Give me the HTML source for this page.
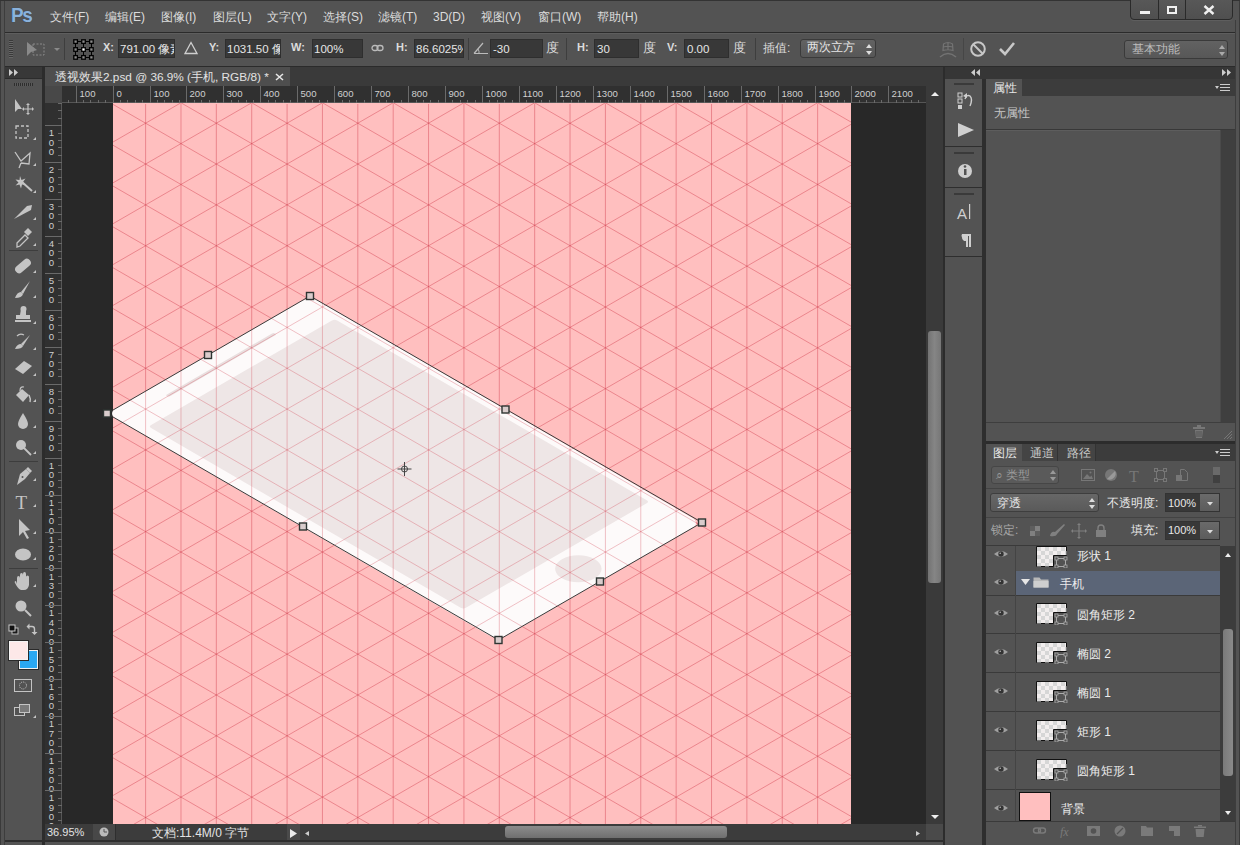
<!DOCTYPE html>
<html><head><meta charset="utf-8">
<style>
*{margin:0;padding:0;box-sizing:border-box}
html,body{width:1240px;height:845px;overflow:hidden;background:#535353;font-family:"Liberation Sans",sans-serif;color:#dcdcdc;font-size:12px}
.a{position:absolute}
.t{position:absolute;white-space:nowrap;line-height:1}
.inp{position:absolute;background:#383838;border:1px solid #2e2e2e}
.btn{position:absolute;background:linear-gradient(#626262,#575757);border:1px solid #3a3a3a;border-radius:3px}
</style></head><body>
<!-- window frame -->
<div class="a" style="left:0;top:0;width:1240px;height:845px;background:#535353;border-left:1px solid #3a3a3a;border-right:1px solid #3a3a3a"></div>
<div class="a" style="left:4px;top:1px;width:1px;height:844px;background:#3d3d3d"></div>
<div class="a" style="left:1235px;top:20px;width:1px;height:825px;background:#3d3d3d"></div>

<!-- MENU BAR -->
<div id="menubar">
<div class="a" style="left:0;top:0;width:1240px;height:1px;background:#333"></div>
<div class="t" style="left:11px;top:4px;font-size:21px;font-weight:bold;color:#8ab2dc;letter-spacing:-1.5px;transform:scaleX(0.9);transform-origin:0 0;text-shadow:0 0 1px #2a4060">Ps</div>
<div class="t" style="left:50px;top:11px">文件(F)</div>
<div class="t" style="left:105px;top:11px">编辑(E)</div>
<div class="t" style="left:161px;top:11px">图像(I)</div>
<div class="t" style="left:213px;top:11px">图层(L)</div>
<div class="t" style="left:267px;top:11px">文字(Y)</div>
<div class="t" style="left:323px;top:11px">选择(S)</div>
<div class="t" style="left:378px;top:11px">滤镜(T)</div>
<div class="t" style="left:433px;top:11px">3D(D)</div>
<div class="t" style="left:481px;top:11px">视图(V)</div>
<div class="t" style="left:538px;top:11px">窗口(W)</div>
<div class="t" style="left:597px;top:11px">帮助(H)</div>
<!-- window buttons -->
<div class="a" style="left:1130px;top:-1px;width:103px;height:21px;background:linear-gradient(#585858,#4f4f4f);border:1px solid #2a2a2a;border-radius:0 0 4px 4px;box-shadow:0 1px 0 #5e5e5e"></div>
<div class="a" style="left:1158px;top:0;width:1px;height:19px;background:#2a2a2a"></div>
<div class="a" style="left:1185px;top:0;width:1px;height:19px;background:#2a2a2a"></div>
<div class="a" style="left:1140px;top:11px;width:10px;height:3px;background:#f0f0f0"></div>
<div class="a" style="left:1167px;top:6px;width:10px;height:8px;border:2px solid #f0f0f0;border-top-width:2px"></div>
<svg class="a" style="left:1203px;top:5px" width="12" height="10"><path d="M1.5 1 L10.5 9 M10.5 1 L1.5 9" stroke="#f0f0f0" stroke-width="2.4"/></svg>
</div>

<!-- OPTIONS BAR -->
<div class="a" style="left:5px;top:32px;width:1230px;height:1px;background:#2b2b2b"></div>
<div class="a" style="left:5px;top:33px;width:1230px;height:1px;background:#5e5e5e"></div>
<div class="a" style="left:5px;top:66px;width:1230px;height:1px;background:#2b2b2b;z-index:5"></div>
<div id="optbar">
<!-- grip -->
<div class="a" style="left:9px;top:40px;width:4px;height:18px;background:repeating-linear-gradient(#3a3a3a 0 1px,#666 1px 2px)"></div>
<!-- tool icon -->
<svg class="a" style="left:25px;top:40px" width="40" height="18" viewBox="0 0 40 18">
<path d="M2 2 L2 16 L6 12 L12 10 Z" fill="#8a8a8a"/>
<rect x="8" y="4" width="11" height="11" fill="none" stroke="#8a8a8a" stroke-dasharray="2 1.5"/>
<path d="M29 8 L35 8 L32 11 Z" fill="#8a8a8a"/>
</svg>
<div class="a" style="left:64px;top:38px;width:1px;height:22px;background:#3e3e3e"></div>
<!-- reference point -->
<svg class="a" style="left:73px;top:39px" width="21" height="21" viewBox="0 0 21 21">
<g stroke="#000" stroke-width="1" fill="none"><path d="M5 2.5 H8 M13 2.5 H16 M5 10.5 H8 M13 10.5 H16 M5 18.5 H8 M13 18.5 H16 M2.5 5 V8 M2.5 13 V16 M10.5 5 V8 M10.5 13 V16 M18.5 5 V8 M18.5 13 V16"/></g>
<g fill="#8a8a8a" stroke="#000" stroke-width="1.3">
<rect x="0.8" y="0.8" width="3.6" height="3.6"/><rect x="8.7" y="0.8" width="3.6" height="3.6"/><rect x="16.6" y="0.8" width="3.6" height="3.6"/>
<rect x="0.8" y="8.7" width="3.6" height="3.6"/><rect x="8.7" y="8.7" width="3.6" height="3.6" fill="#fff"/><rect x="16.6" y="8.7" width="3.6" height="3.6"/>
<rect x="0.8" y="16.6" width="3.6" height="3.6"/><rect x="8.7" y="16.6" width="3.6" height="3.6"/><rect x="16.6" y="16.6" width="3.6" height="3.6"/>
</g></svg>
<div class="t" style="left:103px;top:42px;font-weight:bold;font-size:11px">X:</div>
<div class="a inp" style="left:118px;top:39px;width:57px;height:19px"></div>
<div class="t" style="left:120px;top:44px;color:#e6e6e6;font-size:11.5px;width:54px;overflow:hidden">791.00 像素</div>
<svg class="a" style="left:184px;top:41px" width="14" height="14"><path d="M7 1.5 L13 12.5 L1 12.5 Z" fill="none" stroke="#cfcfcf" stroke-width="1.3"/></svg>
<div class="t" style="left:209px;top:42px;font-weight:bold;font-size:11px">Y:</div>
<div class="a inp" style="left:225px;top:39px;width:56px;height:19px"></div>
<div class="t" style="left:227px;top:44px;color:#e6e6e6;font-size:11.5px;width:53px;overflow:hidden">1031.50 像素</div>
<div class="t" style="left:291px;top:42px;font-weight:bold;font-size:11px">W:</div>
<div class="a inp" style="left:312px;top:39px;width:51px;height:19px"></div>
<div class="t" style="left:314px;top:44px;color:#e6e6e6;font-size:11.5px">100%</div>
<svg class="a" style="left:371px;top:44px" width="14" height="9"><rect x="1" y="1.5" width="6" height="5" rx="2.5" fill="none" stroke="#bbb" stroke-width="1.3"/><rect x="6" y="1.5" width="6" height="5" rx="2.5" fill="none" stroke="#bbb" stroke-width="1.3"/></svg>
<div class="t" style="left:396px;top:42px;font-weight:bold;font-size:11px">H:</div>
<div class="a inp" style="left:414px;top:39px;width:50px;height:19px"></div>
<div class="t" style="left:416px;top:44px;color:#e6e6e6;font-size:11.5px;width:47px;overflow:hidden">86.6025%</div>
<div class="a" style="left:468px;top:38px;width:1px;height:22px;background:#3e3e3e"></div>
<svg class="a" style="left:473px;top:41px" width="16" height="14"><path d="M1 12.5 L15 12.5 M1 12.5 L10 2" fill="none" stroke="#bbb" stroke-width="1.2"/><path d="M6 12.5 A6 6 0 0 0 5 8" fill="none" stroke="#bbb"/></svg>
<div class="a inp" style="left:490px;top:39px;width:53px;height:19px"></div>
<div class="t" style="left:493px;top:44px;color:#e6e6e6;font-size:11.5px">-30</div>
<div class="t" style="left:546px;top:41px;font-size:13px">度</div>
<div class="a" style="left:566px;top:38px;width:1px;height:22px;background:#3e3e3e"></div>
<div class="t" style="left:577px;top:42px;font-weight:bold;font-size:11px">H:</div>
<div class="a inp" style="left:594px;top:39px;width:45px;height:19px"></div>
<div class="t" style="left:597px;top:44px;color:#e6e6e6;font-size:11.5px">30</div>
<div class="t" style="left:643px;top:41px;font-size:13px">度</div>
<div class="t" style="left:667px;top:42px;font-weight:bold;font-size:11px">V:</div>
<div class="a inp" style="left:684px;top:39px;width:45px;height:19px"></div>
<div class="t" style="left:687px;top:44px;color:#e6e6e6;font-size:11.5px">0.00</div>
<div class="t" style="left:733px;top:41px;font-size:13px">度</div>
<div class="a" style="left:755px;top:38px;width:1px;height:22px;background:#3e3e3e"></div>
<div class="t" style="left:763px;top:42px">插值:</div>
<div class="a btn" style="left:800px;top:39px;width:76px;height:19px"></div>
<div class="t" style="left:807px;top:42px;color:#e6e6e6;font-size:11.5px">两次立方</div>
<svg class="a" style="left:866px;top:44px" width="6" height="11"><path d="M0 4 L3 0 L6 4Z M0 7 L3 11 L6 7Z" fill="#ddd"/></svg>
<!-- warp / cancel / commit -->
<svg class="a" style="left:938px;top:40px" width="20" height="18"><g fill="none" stroke="#737373" stroke-width="1.2"><path d="M5.5 4 Q10 1 14.5 4 L15 10.5 Q10 9 5 10.5Z M10 2.5 V9.8 M5.3 7 Q10 5.5 14.7 7"/><path d="M2 17 Q10 10 18 17" stroke-width="1.5"/></g></svg>
<div class="a" style="left:963px;top:38px;width:1px;height:22px;background:#464646"></div>
<svg class="a" style="left:969px;top:40px" width="18" height="18"><circle cx="9" cy="9" r="6.8" fill="none" stroke="#c8c8c8" stroke-width="2"/><path d="M4.5 4.5 L13.5 13.5" stroke="#c8c8c8" stroke-width="2"/></svg>
<svg class="a" style="left:998px;top:41px" width="18" height="16"><path d="M2 8 L7 13 L16 2" fill="none" stroke="#c8c8c8" stroke-width="2.6"/></svg>
<div class="a btn" style="left:1124px;top:40px;width:104px;height:19px"></div>
<div class="t" style="left:1132px;top:43px;color:#bdbdbd">基本功能</div>
<svg class="a" style="left:1219px;top:45px" width="6" height="11"><path d="M0 4 L3 0 L6 4Z M0 7 L3 11 L6 7Z" fill="#aaa"/></svg>
</div>
<!-- LEFT TOOLBAR -->
<div class="a" style="left:5px;top:66px;width:37px;height:13px;background:#383838;border-bottom:1px solid #2c2c2c"></div>
<svg class="a" style="left:9px;top:69px" width="10" height="7"><path d="M0 0 L4 3.5 L0 7Z M5 0 L9 3.5 L5 7Z" fill="#ccc"/></svg>
<div class="a" style="left:42px;top:66px;width:3px;height:779px;background:#2c2c2c"></div>
<div class="a" style="left:14px;top:83px;width:19px;height:3px;background:repeating-linear-gradient(90deg,#2e2e2e 0 1px,#5a5a5a 1px 2px)"></div>
<svg class="a" style="left:5px;top:92px" width="37" height="630" viewBox="5 92 37 630">
<g fill="#c4c4c4" stroke="none">
<!-- move -->
<path d="M15 99 L15 112 L18 109 L22 109 Z"/>
<path d="M28 104 L28 114 M23 109 L33 109" stroke="#c4c4c4" stroke-width="1.2"/>
<path d="M28 103 l-2 2 h4z M28 115 l-2 -2 h4z M22 109 l2 -2 v4z M34 109 l-2 -2 v4z"/>
<!-- marquee -->
<rect x="16" y="126" width="12" height="12" fill="none" stroke="#c4c4c4" stroke-width="1.3" stroke-dasharray="3 2"/>
<path d="M33 140 l3 0 0 -3z"/>
<!-- lasso -->
<path d="M15 152 L21 161 L30 153 L29 164 L21 163 M21 163 L19 168" fill="none" stroke="#c4c4c4" stroke-width="1.3"/>
<path d="M33 166 l3 0 0 -3z"/>
<!-- wand -->
<path d="M22 182 L32 191" stroke="#c4c4c4" stroke-width="2"/>
<path d="M20 176 l1.5 4 4 -1.5 -2.5 3.5 3 3 -4 -0.5 -1 4 -1.5 -4 -4 1 3 -3 -3 -3 4 0.5z"/>
<path d="M33 193 l3 0 0 -3z"/>
<!-- crop/pen-ish (blade) -->
<path d="M14 219 L27 206 L32 205 L31 210 Z"/>
<path d="M33 220 l3 0 0 -3z"/>
<!-- eyedropper -->
<path d="M17 243 L25 235 L28 238 L20 246 L17 247 Z" fill="none" stroke="#c4c4c4" stroke-width="1.3"/>
<path d="M24 232 L28 228 L32 232 L28 236 Z"/>
<path d="M33 246 l3 0 0 -3z"/>
</g>
<rect x="9" y="250" width="29" height="1" fill="#3d3d3d"/>
<g fill="#c4c4c4">
<!-- healing band-aid -->
<rect x="14" y="262" width="18" height="8" rx="4" transform="rotate(-40 23 266)"/>
<path d="M33 273 l3 0 0 -3z"/>
<!-- brush -->
<path d="M30 281 L21 292 L23 294 Z"/><path d="M15 298 Q17 292 21 292 L23 294 Q22 298 15 298Z"/>
<path d="M33 298 l3 0 0 -3z"/>
<!-- stamp -->
<path d="M21 309 h5 v6 h4 v4 h-14 v-4 h4z"/><rect x="15" y="320" width="16" height="2"/><circle cx="23.5" cy="309" r="3"/>
<path d="M33 324 l3 0 0 -3z"/>
<!-- history brush -->
<path d="M30 335 L21 344 L23 346 Z"/><path d="M15 349 Q17 344 21 344 L23 346 Q22 349 15 349Z"/>
<path d="M17 336 Q20 333 24 335" fill="none" stroke="#c4c4c4" stroke-width="1.2"/>
<path d="M33 350 l3 0 0 -3z"/>
<!-- eraser -->
<path d="M15 369 L24 361 L32 366 L23 374 Z"/>
<path d="M33 376 l3 0 0 -3z"/>
<!-- bucket -->
<g transform="translate(0,3)"><path d="M16 392 L22 386 L29 392 L23 399 Z"/><path d="M20 388 Q20 383 24 384" fill="none" stroke="#c4c4c4" stroke-width="1.2"/><path d="M29 392 Q31 396 30 399" fill="none" stroke="#c4c4c4" stroke-width="1.5"/></g>
<path d="M33 402 l3 0 0 -3z"/>
<!-- blur drop -->
<path d="M23 413 Q28 421 28 424 A5 5 0 0 1 18 424 Q18 421 23 413Z"/>
<path d="M33 428 l3 0 0 -3z"/>
<!-- dodge -->
<circle cx="21" cy="445" r="5"/><path d="M24 448 L31 455" stroke="#c4c4c4" stroke-width="1.8"/>
<path d="M33 454 l3 0 0 -3z"/>
</g>
<rect x="9" y="461" width="29" height="1" fill="#3d3d3d"/>
<g fill="#c4c4c4">
<!-- pen -->
<path d="M17 485 L20 474 L26 469 L30 473 L25 479 Z"/><path d="M26 469 L28 467 L32 471 L30 473Z"/><circle cx="22.5" cy="477" r="1" fill="#535353"/>
<path d="M33 481 l3 0 0 -3z"/>
<!-- type -->
<text x="15.5" y="509" font-family="Liberation Serif" font-size="19" fill="#c4c4c4">T</text>
<path d="M33 507 l3 0 0 -3z"/>
<!-- path select -->
<path d="M19 519 L19 536 L23 532 L27 539 L29 538 L25 531 L30 530 Z"/>
<path d="M33 534 l3 0 0 -3z"/>
<!-- ellipse -->
<ellipse cx="23" cy="554.5" rx="8" ry="6"/>
<path d="M33 560 l3 0 0 -3z"/>
</g>
<rect x="9" y="568" width="29" height="1" fill="#3d3d3d"/>
<g fill="#c4c4c4">
<!-- hand -->
<path d="M17 584 L17 578 Q17 576 18.5 576 Q20 576 20 578 L20 575 Q20 573 21.5 573 Q23 573 23 575 L23 574 Q23 572 24.5 572 Q26 572 26 574 L26 577 Q26 575.5 27.5 575.5 Q29 575.5 29 577 L29 585 Q28 590 24 590 L21 590 Q18 589 15 583 Q14 581 16 581Z"/>
<path d="M33 587 l3 0 0 -3z"/>
<!-- zoom -->
<circle cx="21" cy="606" r="5.5"/><path d="M25 610 L31 616" stroke="#c4c4c4" stroke-width="2"/>
<!-- default colors -->
<rect x="12" y="628" width="6" height="6" fill="#1a1a1a" stroke="#bbb" stroke-width="1"/><rect x="9" y="625" width="6" height="6" fill="#111" stroke="#ccc" stroke-width="1"/>
<path d="M29 626.5 H32 Q34.5 626.5 34.5 629 V632" fill="none" stroke="#c4c4c4" stroke-width="1.4"/><path d="M26.5 626.5 L29.5 623.5 V629.5Z M31.5 632 H37.5 L34.5 635Z" fill="#c4c4c4"/>
</g>
<!-- fg/bg -->
<rect x="19.5" y="650.5" width="18" height="18" fill="#2aa8f2" stroke="#f0f0f0" stroke-width="1"/><rect x="18.5" y="649.5" width="20" height="20" fill="none" stroke="#2a2a2a" stroke-width="1"/>
<rect x="9.5" y="641.5" width="18" height="18" fill="#fde8e8" stroke="#f4f4f4" stroke-width="1"/><rect x="8.5" y="640.5" width="20" height="20" fill="none" stroke="#2a2a2a" stroke-width="1"/>
<!-- quick mask -->
<rect x="14.5" y="679.5" width="17" height="12" fill="none" stroke="#c4c4c4" stroke-width="1"/>
<circle cx="23" cy="685.5" r="3.5" fill="none" stroke="#c4c4c4" stroke-width="1" stroke-dasharray="1 1"/>
<!-- screen mode -->
<rect x="14.5" y="707.5" width="10" height="8" fill="none" stroke="#c4c4c4"/><rect x="19.5" y="704.5" width="10" height="8" fill="#7a7a7a" stroke="#c4c4c4"/>
<path d="M33 718 l3 0 0 -3z" fill="#c4c4c4"/>
</svg>
<!-- DOC TAB ROW -->
<div class="a" style="left:45px;top:66px;width:898px;height:20px;background:#3a3a3a;border-top:1px solid #2c2c2c"></div>
<div class="a" style="left:45px;top:67px;width:245px;height:19px;background:#4e4e4e"></div>
<div class="t" style="left:55px;top:72px;color:#e2e2e2;font-size:11.8px">透视效果2.psd @ 36.9% (手机, RGB/8) *</div>
<svg class="a" style="left:275px;top:73px" width="9" height="8"><path d="M1 1 L8 7 M8 1 L1 7" stroke="#e6e6e6" stroke-width="1.6"/></svg>
<!-- RULERS -->
<div class="a" style="left:45px;top:86px;width:17px;height:17px;background:#484848"></div>
<svg class="a" style="left:0;top:0" width="1240" height="845">
<rect x="62" y="86" width="864" height="17" fill="#303030"/>
<rect x="45" y="103" width="17" height="721" fill="#303030"/>
<line x1="62" y1="102.5" x2="926" y2="102.5" stroke="#565656"/>
<line x1="61.5" y1="103" x2="61.5" y2="824" stroke="#565656"/>
<g font-family="Liberation Sans" font-size="9.6" fill="#cfcfcf">
<line x1="68.5" y1="100" x2="68.5" y2="103" stroke="#6a6a6a"/>
<line x1="76.5" y1="86" x2="76.5" y2="103" stroke="#6a6a6a"/>
<text x="79.5" y="97">100</text>
<line x1="83.5" y1="100" x2="83.5" y2="103" stroke="#6a6a6a"/>
<line x1="90.5" y1="100" x2="90.5" y2="103" stroke="#6a6a6a"/>
<line x1="98.5" y1="100" x2="98.5" y2="103" stroke="#6a6a6a"/>
<line x1="105.5" y1="100" x2="105.5" y2="103" stroke="#6a6a6a"/>
<line x1="113.5" y1="86" x2="113.5" y2="103" stroke="#6a6a6a"/>
<text x="116.5" y="97">0</text>
<line x1="120.5" y1="100" x2="120.5" y2="103" stroke="#6a6a6a"/>
<line x1="127.5" y1="100" x2="127.5" y2="103" stroke="#6a6a6a"/>
<line x1="135.5" y1="100" x2="135.5" y2="103" stroke="#6a6a6a"/>
<line x1="142.5" y1="100" x2="142.5" y2="103" stroke="#6a6a6a"/>
<line x1="150.5" y1="86" x2="150.5" y2="103" stroke="#6a6a6a"/>
<text x="153.5" y="97">100</text>
<line x1="157.5" y1="100" x2="157.5" y2="103" stroke="#6a6a6a"/>
<line x1="164.5" y1="100" x2="164.5" y2="103" stroke="#6a6a6a"/>
<line x1="172.5" y1="100" x2="172.5" y2="103" stroke="#6a6a6a"/>
<line x1="179.5" y1="100" x2="179.5" y2="103" stroke="#6a6a6a"/>
<line x1="186.5" y1="86" x2="186.5" y2="103" stroke="#6a6a6a"/>
<text x="189.5" y="97">200</text>
<line x1="194.5" y1="100" x2="194.5" y2="103" stroke="#6a6a6a"/>
<line x1="201.5" y1="100" x2="201.5" y2="103" stroke="#6a6a6a"/>
<line x1="209.5" y1="100" x2="209.5" y2="103" stroke="#6a6a6a"/>
<line x1="216.5" y1="100" x2="216.5" y2="103" stroke="#6a6a6a"/>
<line x1="223.5" y1="86" x2="223.5" y2="103" stroke="#6a6a6a"/>
<text x="226.5" y="97">300</text>
<line x1="231.5" y1="100" x2="231.5" y2="103" stroke="#6a6a6a"/>
<line x1="238.5" y1="100" x2="238.5" y2="103" stroke="#6a6a6a"/>
<line x1="246.5" y1="100" x2="246.5" y2="103" stroke="#6a6a6a"/>
<line x1="253.5" y1="100" x2="253.5" y2="103" stroke="#6a6a6a"/>
<line x1="260.5" y1="86" x2="260.5" y2="103" stroke="#6a6a6a"/>
<text x="263.5" y="97">400</text>
<line x1="268.5" y1="100" x2="268.5" y2="103" stroke="#6a6a6a"/>
<line x1="275.5" y1="100" x2="275.5" y2="103" stroke="#6a6a6a"/>
<line x1="283.5" y1="100" x2="283.5" y2="103" stroke="#6a6a6a"/>
<line x1="290.5" y1="100" x2="290.5" y2="103" stroke="#6a6a6a"/>
<line x1="297.5" y1="86" x2="297.5" y2="103" stroke="#6a6a6a"/>
<text x="300.5" y="97">500</text>
<line x1="305.5" y1="100" x2="305.5" y2="103" stroke="#6a6a6a"/>
<line x1="312.5" y1="100" x2="312.5" y2="103" stroke="#6a6a6a"/>
<line x1="319.5" y1="100" x2="319.5" y2="103" stroke="#6a6a6a"/>
<line x1="327.5" y1="100" x2="327.5" y2="103" stroke="#6a6a6a"/>
<line x1="334.5" y1="86" x2="334.5" y2="103" stroke="#6a6a6a"/>
<text x="337.5" y="97">600</text>
<line x1="342.5" y1="100" x2="342.5" y2="103" stroke="#6a6a6a"/>
<line x1="349.5" y1="100" x2="349.5" y2="103" stroke="#6a6a6a"/>
<line x1="356.5" y1="100" x2="356.5" y2="103" stroke="#6a6a6a"/>
<line x1="364.5" y1="100" x2="364.5" y2="103" stroke="#6a6a6a"/>
<line x1="371.5" y1="86" x2="371.5" y2="103" stroke="#6a6a6a"/>
<text x="374.5" y="97">700</text>
<line x1="379.5" y1="100" x2="379.5" y2="103" stroke="#6a6a6a"/>
<line x1="386.5" y1="100" x2="386.5" y2="103" stroke="#6a6a6a"/>
<line x1="393.5" y1="100" x2="393.5" y2="103" stroke="#6a6a6a"/>
<line x1="401.5" y1="100" x2="401.5" y2="103" stroke="#6a6a6a"/>
<line x1="408.5" y1="86" x2="408.5" y2="103" stroke="#6a6a6a"/>
<text x="411.5" y="97">800</text>
<line x1="416.5" y1="100" x2="416.5" y2="103" stroke="#6a6a6a"/>
<line x1="423.5" y1="100" x2="423.5" y2="103" stroke="#6a6a6a"/>
<line x1="430.5" y1="100" x2="430.5" y2="103" stroke="#6a6a6a"/>
<line x1="438.5" y1="100" x2="438.5" y2="103" stroke="#6a6a6a"/>
<line x1="445.5" y1="86" x2="445.5" y2="103" stroke="#6a6a6a"/>
<text x="448.5" y="97">900</text>
<line x1="452.5" y1="100" x2="452.5" y2="103" stroke="#6a6a6a"/>
<line x1="460.5" y1="100" x2="460.5" y2="103" stroke="#6a6a6a"/>
<line x1="467.5" y1="100" x2="467.5" y2="103" stroke="#6a6a6a"/>
<line x1="475.5" y1="100" x2="475.5" y2="103" stroke="#6a6a6a"/>
<line x1="482.5" y1="86" x2="482.5" y2="103" stroke="#6a6a6a"/>
<text x="485.5" y="97">1000</text>
<line x1="489.5" y1="100" x2="489.5" y2="103" stroke="#6a6a6a"/>
<line x1="497.5" y1="100" x2="497.5" y2="103" stroke="#6a6a6a"/>
<line x1="504.5" y1="100" x2="504.5" y2="103" stroke="#6a6a6a"/>
<line x1="512.5" y1="100" x2="512.5" y2="103" stroke="#6a6a6a"/>
<line x1="519.5" y1="86" x2="519.5" y2="103" stroke="#6a6a6a"/>
<text x="522.5" y="97">1100</text>
<line x1="526.5" y1="100" x2="526.5" y2="103" stroke="#6a6a6a"/>
<line x1="534.5" y1="100" x2="534.5" y2="103" stroke="#6a6a6a"/>
<line x1="541.5" y1="100" x2="541.5" y2="103" stroke="#6a6a6a"/>
<line x1="549.5" y1="100" x2="549.5" y2="103" stroke="#6a6a6a"/>
<line x1="556.5" y1="86" x2="556.5" y2="103" stroke="#6a6a6a"/>
<text x="559.5" y="97">1200</text>
<line x1="563.5" y1="100" x2="563.5" y2="103" stroke="#6a6a6a"/>
<line x1="571.5" y1="100" x2="571.5" y2="103" stroke="#6a6a6a"/>
<line x1="578.5" y1="100" x2="578.5" y2="103" stroke="#6a6a6a"/>
<line x1="585.5" y1="100" x2="585.5" y2="103" stroke="#6a6a6a"/>
<line x1="593.5" y1="86" x2="593.5" y2="103" stroke="#6a6a6a"/>
<text x="596.5" y="97">1300</text>
<line x1="600.5" y1="100" x2="600.5" y2="103" stroke="#6a6a6a"/>
<line x1="608.5" y1="100" x2="608.5" y2="103" stroke="#6a6a6a"/>
<line x1="615.5" y1="100" x2="615.5" y2="103" stroke="#6a6a6a"/>
<line x1="622.5" y1="100" x2="622.5" y2="103" stroke="#6a6a6a"/>
<line x1="630.5" y1="86" x2="630.5" y2="103" stroke="#6a6a6a"/>
<text x="633.5" y="97">1400</text>
<line x1="637.5" y1="100" x2="637.5" y2="103" stroke="#6a6a6a"/>
<line x1="645.5" y1="100" x2="645.5" y2="103" stroke="#6a6a6a"/>
<line x1="652.5" y1="100" x2="652.5" y2="103" stroke="#6a6a6a"/>
<line x1="659.5" y1="100" x2="659.5" y2="103" stroke="#6a6a6a"/>
<line x1="667.5" y1="86" x2="667.5" y2="103" stroke="#6a6a6a"/>
<text x="670.5" y="97">1500</text>
<line x1="674.5" y1="100" x2="674.5" y2="103" stroke="#6a6a6a"/>
<line x1="682.5" y1="100" x2="682.5" y2="103" stroke="#6a6a6a"/>
<line x1="689.5" y1="100" x2="689.5" y2="103" stroke="#6a6a6a"/>
<line x1="696.5" y1="100" x2="696.5" y2="103" stroke="#6a6a6a"/>
<line x1="704.5" y1="86" x2="704.5" y2="103" stroke="#6a6a6a"/>
<text x="707.5" y="97">1600</text>
<line x1="711.5" y1="100" x2="711.5" y2="103" stroke="#6a6a6a"/>
<line x1="718.5" y1="100" x2="718.5" y2="103" stroke="#6a6a6a"/>
<line x1="726.5" y1="100" x2="726.5" y2="103" stroke="#6a6a6a"/>
<line x1="733.5" y1="100" x2="733.5" y2="103" stroke="#6a6a6a"/>
<line x1="741.5" y1="86" x2="741.5" y2="103" stroke="#6a6a6a"/>
<text x="744.5" y="97">1700</text>
<line x1="748.5" y1="100" x2="748.5" y2="103" stroke="#6a6a6a"/>
<line x1="755.5" y1="100" x2="755.5" y2="103" stroke="#6a6a6a"/>
<line x1="763.5" y1="100" x2="763.5" y2="103" stroke="#6a6a6a"/>
<line x1="770.5" y1="100" x2="770.5" y2="103" stroke="#6a6a6a"/>
<line x1="778.5" y1="86" x2="778.5" y2="103" stroke="#6a6a6a"/>
<text x="781.5" y="97">1800</text>
<line x1="785.5" y1="100" x2="785.5" y2="103" stroke="#6a6a6a"/>
<line x1="792.5" y1="100" x2="792.5" y2="103" stroke="#6a6a6a"/>
<line x1="800.5" y1="100" x2="800.5" y2="103" stroke="#6a6a6a"/>
<line x1="807.5" y1="100" x2="807.5" y2="103" stroke="#6a6a6a"/>
<line x1="815.5" y1="86" x2="815.5" y2="103" stroke="#6a6a6a"/>
<text x="818.5" y="97">1900</text>
<line x1="822.5" y1="100" x2="822.5" y2="103" stroke="#6a6a6a"/>
<line x1="829.5" y1="100" x2="829.5" y2="103" stroke="#6a6a6a"/>
<line x1="837.5" y1="100" x2="837.5" y2="103" stroke="#6a6a6a"/>
<line x1="844.5" y1="100" x2="844.5" y2="103" stroke="#6a6a6a"/>
<line x1="851.5" y1="86" x2="851.5" y2="103" stroke="#6a6a6a"/>
<text x="854.5" y="97">2000</text>
<line x1="859.5" y1="100" x2="859.5" y2="103" stroke="#6a6a6a"/>
<line x1="866.5" y1="100" x2="866.5" y2="103" stroke="#6a6a6a"/>
<line x1="874.5" y1="100" x2="874.5" y2="103" stroke="#6a6a6a"/>
<line x1="881.5" y1="100" x2="881.5" y2="103" stroke="#6a6a6a"/>
<line x1="888.5" y1="86" x2="888.5" y2="103" stroke="#6a6a6a"/>
<text x="891.5" y="97">2100</text>
<line x1="896.5" y1="100" x2="896.5" y2="103" stroke="#6a6a6a"/>
<line x1="903.5" y1="100" x2="903.5" y2="103" stroke="#6a6a6a"/>
<line x1="911.5" y1="100" x2="911.5" y2="103" stroke="#6a6a6a"/>
<line x1="918.5" y1="100" x2="918.5" y2="103" stroke="#6a6a6a"/><line x1="58" y1="103.5" x2="62" y2="103.5" stroke="#6a6a6a"/>
<line x1="58" y1="110.5" x2="62" y2="110.5" stroke="#6a6a6a"/>
<line x1="58" y1="118.5" x2="62" y2="118.5" stroke="#6a6a6a"/>
<line x1="45" y1="125.5" x2="62" y2="125.5" stroke="#6a6a6a"/>
<text x="51.5" text-anchor="middle" y="136.1">1</text>
<text x="51.5" text-anchor="middle" y="145.5">0</text>
<text x="51.5" text-anchor="middle" y="154.9">0</text>
<line x1="58" y1="133.5" x2="62" y2="133.5" stroke="#6a6a6a"/>
<line x1="58" y1="140.5" x2="62" y2="140.5" stroke="#6a6a6a"/>
<line x1="58" y1="147.5" x2="62" y2="147.5" stroke="#6a6a6a"/>
<line x1="58" y1="155.5" x2="62" y2="155.5" stroke="#6a6a6a"/>
<line x1="45" y1="162.5" x2="62" y2="162.5" stroke="#6a6a6a"/>
<text x="51.5" text-anchor="middle" y="173.1">2</text>
<text x="51.5" text-anchor="middle" y="182.5">0</text>
<text x="51.5" text-anchor="middle" y="191.9">0</text>
<line x1="58" y1="169.5" x2="62" y2="169.5" stroke="#6a6a6a"/>
<line x1="58" y1="177.5" x2="62" y2="177.5" stroke="#6a6a6a"/>
<line x1="58" y1="184.5" x2="62" y2="184.5" stroke="#6a6a6a"/>
<line x1="58" y1="192.5" x2="62" y2="192.5" stroke="#6a6a6a"/>
<line x1="45" y1="199.5" x2="62" y2="199.5" stroke="#6a6a6a"/>
<text x="51.5" text-anchor="middle" y="210.0">3</text>
<text x="51.5" text-anchor="middle" y="219.4">0</text>
<text x="51.5" text-anchor="middle" y="228.8">0</text>
<line x1="58" y1="206.5" x2="62" y2="206.5" stroke="#6a6a6a"/>
<line x1="58" y1="214.5" x2="62" y2="214.5" stroke="#6a6a6a"/>
<line x1="58" y1="221.5" x2="62" y2="221.5" stroke="#6a6a6a"/>
<line x1="58" y1="229.5" x2="62" y2="229.5" stroke="#6a6a6a"/>
<line x1="45" y1="236.5" x2="62" y2="236.5" stroke="#6a6a6a"/>
<text x="51.5" text-anchor="middle" y="247.0">4</text>
<text x="51.5" text-anchor="middle" y="256.4">0</text>
<text x="51.5" text-anchor="middle" y="265.8">0</text>
<line x1="58" y1="243.5" x2="62" y2="243.5" stroke="#6a6a6a"/>
<line x1="58" y1="251.5" x2="62" y2="251.5" stroke="#6a6a6a"/>
<line x1="58" y1="258.5" x2="62" y2="258.5" stroke="#6a6a6a"/>
<line x1="58" y1="266.5" x2="62" y2="266.5" stroke="#6a6a6a"/>
<line x1="45" y1="273.5" x2="62" y2="273.5" stroke="#6a6a6a"/>
<text x="51.5" text-anchor="middle" y="283.9">5</text>
<text x="51.5" text-anchor="middle" y="293.3">0</text>
<text x="51.5" text-anchor="middle" y="302.7">0</text>
<line x1="58" y1="280.5" x2="62" y2="280.5" stroke="#6a6a6a"/>
<line x1="58" y1="288.5" x2="62" y2="288.5" stroke="#6a6a6a"/>
<line x1="58" y1="295.5" x2="62" y2="295.5" stroke="#6a6a6a"/>
<line x1="58" y1="302.5" x2="62" y2="302.5" stroke="#6a6a6a"/>
<line x1="45" y1="310.5" x2="62" y2="310.5" stroke="#6a6a6a"/>
<text x="51.5" text-anchor="middle" y="320.9">6</text>
<text x="51.5" text-anchor="middle" y="330.3">0</text>
<text x="51.5" text-anchor="middle" y="339.7">0</text>
<line x1="58" y1="317.5" x2="62" y2="317.5" stroke="#6a6a6a"/>
<line x1="58" y1="325.5" x2="62" y2="325.5" stroke="#6a6a6a"/>
<line x1="58" y1="332.5" x2="62" y2="332.5" stroke="#6a6a6a"/>
<line x1="58" y1="339.5" x2="62" y2="339.5" stroke="#6a6a6a"/>
<line x1="45" y1="347.5" x2="62" y2="347.5" stroke="#6a6a6a"/>
<text x="51.5" text-anchor="middle" y="357.8">7</text>
<text x="51.5" text-anchor="middle" y="367.2">0</text>
<text x="51.5" text-anchor="middle" y="376.6">0</text>
<line x1="58" y1="354.5" x2="62" y2="354.5" stroke="#6a6a6a"/>
<line x1="58" y1="362.5" x2="62" y2="362.5" stroke="#6a6a6a"/>
<line x1="58" y1="369.5" x2="62" y2="369.5" stroke="#6a6a6a"/>
<line x1="58" y1="376.5" x2="62" y2="376.5" stroke="#6a6a6a"/>
<line x1="45" y1="384.5" x2="62" y2="384.5" stroke="#6a6a6a"/>
<text x="51.5" text-anchor="middle" y="394.8">8</text>
<text x="51.5" text-anchor="middle" y="404.2">0</text>
<text x="51.5" text-anchor="middle" y="413.6">0</text>
<line x1="58" y1="391.5" x2="62" y2="391.5" stroke="#6a6a6a"/>
<line x1="58" y1="399.5" x2="62" y2="399.5" stroke="#6a6a6a"/>
<line x1="58" y1="406.5" x2="62" y2="406.5" stroke="#6a6a6a"/>
<line x1="58" y1="413.5" x2="62" y2="413.5" stroke="#6a6a6a"/>
<line x1="45" y1="421.5" x2="62" y2="421.5" stroke="#6a6a6a"/>
<text x="51.5" text-anchor="middle" y="431.7">9</text>
<text x="51.5" text-anchor="middle" y="441.1">0</text>
<text x="51.5" text-anchor="middle" y="450.5">0</text>
<line x1="58" y1="428.5" x2="62" y2="428.5" stroke="#6a6a6a"/>
<line x1="58" y1="435.5" x2="62" y2="435.5" stroke="#6a6a6a"/>
<line x1="58" y1="443.5" x2="62" y2="443.5" stroke="#6a6a6a"/>
<line x1="58" y1="450.5" x2="62" y2="450.5" stroke="#6a6a6a"/>
<line x1="45" y1="458.5" x2="62" y2="458.5" stroke="#6a6a6a"/>
<text x="51.5" text-anchor="middle" y="468.6">1</text>
<text x="51.5" text-anchor="middle" y="478.0">0</text>
<text x="51.5" text-anchor="middle" y="487.4">0</text>
<text x="51.5" text-anchor="middle" y="496.8">0</text>
<line x1="58" y1="465.5" x2="62" y2="465.5" stroke="#6a6a6a"/>
<line x1="58" y1="472.5" x2="62" y2="472.5" stroke="#6a6a6a"/>
<line x1="58" y1="480.5" x2="62" y2="480.5" stroke="#6a6a6a"/>
<line x1="58" y1="487.5" x2="62" y2="487.5" stroke="#6a6a6a"/>
<line x1="45" y1="495.5" x2="62" y2="495.5" stroke="#6a6a6a"/>
<text x="51.5" text-anchor="middle" y="505.6">1</text>
<text x="51.5" text-anchor="middle" y="515.0">1</text>
<text x="51.5" text-anchor="middle" y="524.4">0</text>
<text x="51.5" text-anchor="middle" y="533.8">0</text>
<line x1="58" y1="502.5" x2="62" y2="502.5" stroke="#6a6a6a"/>
<line x1="58" y1="509.5" x2="62" y2="509.5" stroke="#6a6a6a"/>
<line x1="58" y1="517.5" x2="62" y2="517.5" stroke="#6a6a6a"/>
<line x1="58" y1="524.5" x2="62" y2="524.5" stroke="#6a6a6a"/>
<line x1="45" y1="532.5" x2="62" y2="532.5" stroke="#6a6a6a"/>
<text x="51.5" text-anchor="middle" y="542.5">1</text>
<text x="51.5" text-anchor="middle" y="551.9">2</text>
<text x="51.5" text-anchor="middle" y="561.3">0</text>
<text x="51.5" text-anchor="middle" y="570.7">0</text>
<line x1="58" y1="539.5" x2="62" y2="539.5" stroke="#6a6a6a"/>
<line x1="58" y1="546.5" x2="62" y2="546.5" stroke="#6a6a6a"/>
<line x1="58" y1="554.5" x2="62" y2="554.5" stroke="#6a6a6a"/>
<line x1="58" y1="561.5" x2="62" y2="561.5" stroke="#6a6a6a"/>
<line x1="45" y1="568.5" x2="62" y2="568.5" stroke="#6a6a6a"/>
<text x="51.5" text-anchor="middle" y="579.5">1</text>
<text x="51.5" text-anchor="middle" y="588.9">3</text>
<text x="51.5" text-anchor="middle" y="598.3">0</text>
<text x="51.5" text-anchor="middle" y="607.7">0</text>
<line x1="58" y1="576.5" x2="62" y2="576.5" stroke="#6a6a6a"/>
<line x1="58" y1="583.5" x2="62" y2="583.5" stroke="#6a6a6a"/>
<line x1="58" y1="591.5" x2="62" y2="591.5" stroke="#6a6a6a"/>
<line x1="58" y1="598.5" x2="62" y2="598.5" stroke="#6a6a6a"/>
<line x1="45" y1="605.5" x2="62" y2="605.5" stroke="#6a6a6a"/>
<text x="51.5" text-anchor="middle" y="616.4">1</text>
<text x="51.5" text-anchor="middle" y="625.8">4</text>
<text x="51.5" text-anchor="middle" y="635.2">0</text>
<text x="51.5" text-anchor="middle" y="644.6">0</text>
<line x1="58" y1="613.5" x2="62" y2="613.5" stroke="#6a6a6a"/>
<line x1="58" y1="620.5" x2="62" y2="620.5" stroke="#6a6a6a"/>
<line x1="58" y1="628.5" x2="62" y2="628.5" stroke="#6a6a6a"/>
<line x1="58" y1="635.5" x2="62" y2="635.5" stroke="#6a6a6a"/>
<line x1="45" y1="642.5" x2="62" y2="642.5" stroke="#6a6a6a"/>
<text x="51.5" text-anchor="middle" y="653.4">1</text>
<text x="51.5" text-anchor="middle" y="662.8">5</text>
<text x="51.5" text-anchor="middle" y="672.2">0</text>
<text x="51.5" text-anchor="middle" y="681.6">0</text>
<line x1="58" y1="650.5" x2="62" y2="650.5" stroke="#6a6a6a"/>
<line x1="58" y1="657.5" x2="62" y2="657.5" stroke="#6a6a6a"/>
<line x1="58" y1="665.5" x2="62" y2="665.5" stroke="#6a6a6a"/>
<line x1="58" y1="672.5" x2="62" y2="672.5" stroke="#6a6a6a"/>
<line x1="45" y1="679.5" x2="62" y2="679.5" stroke="#6a6a6a"/>
<text x="51.5" text-anchor="middle" y="690.3">1</text>
<text x="51.5" text-anchor="middle" y="699.7">6</text>
<text x="51.5" text-anchor="middle" y="709.1">0</text>
<text x="51.5" text-anchor="middle" y="718.5">0</text>
<line x1="58" y1="687.5" x2="62" y2="687.5" stroke="#6a6a6a"/>
<line x1="58" y1="694.5" x2="62" y2="694.5" stroke="#6a6a6a"/>
<line x1="58" y1="701.5" x2="62" y2="701.5" stroke="#6a6a6a"/>
<line x1="58" y1="709.5" x2="62" y2="709.5" stroke="#6a6a6a"/>
<line x1="45" y1="716.5" x2="62" y2="716.5" stroke="#6a6a6a"/>
<text x="51.5" text-anchor="middle" y="727.2">1</text>
<text x="51.5" text-anchor="middle" y="736.6">7</text>
<text x="51.5" text-anchor="middle" y="746.0">0</text>
<text x="51.5" text-anchor="middle" y="755.4">0</text>
<line x1="58" y1="724.5" x2="62" y2="724.5" stroke="#6a6a6a"/>
<line x1="58" y1="731.5" x2="62" y2="731.5" stroke="#6a6a6a"/>
<line x1="58" y1="738.5" x2="62" y2="738.5" stroke="#6a6a6a"/>
<line x1="58" y1="746.5" x2="62" y2="746.5" stroke="#6a6a6a"/>
<line x1="45" y1="753.5" x2="62" y2="753.5" stroke="#6a6a6a"/>
<text x="51.5" text-anchor="middle" y="764.2">1</text>
<text x="51.5" text-anchor="middle" y="773.6">8</text>
<text x="51.5" text-anchor="middle" y="783.0">0</text>
<text x="51.5" text-anchor="middle" y="792.4">0</text>
<line x1="58" y1="761.5" x2="62" y2="761.5" stroke="#6a6a6a"/>
<line x1="58" y1="768.5" x2="62" y2="768.5" stroke="#6a6a6a"/>
<line x1="58" y1="775.5" x2="62" y2="775.5" stroke="#6a6a6a"/>
<line x1="58" y1="783.5" x2="62" y2="783.5" stroke="#6a6a6a"/>
<line x1="45" y1="790.5" x2="62" y2="790.5" stroke="#6a6a6a"/>
<text x="51.5" text-anchor="middle" y="801.1">1</text>
<text x="51.5" text-anchor="middle" y="810.5">9</text>
<text x="51.5" text-anchor="middle" y="819.9">0</text>
<text x="51.5" text-anchor="middle" y="829.3">0</text>
<line x1="58" y1="798.5" x2="62" y2="798.5" stroke="#6a6a6a"/>
<line x1="58" y1="805.5" x2="62" y2="805.5" stroke="#6a6a6a"/>
<line x1="58" y1="812.5" x2="62" y2="812.5" stroke="#6a6a6a"/>
<line x1="58" y1="820.5" x2="62" y2="820.5" stroke="#6a6a6a"/></g>
</svg>
<!-- CANVAS -->
<svg class="a" style="left:0;top:0" width="1240" height="845">
<rect x="62" y="103" width="864" height="721" fill="#282828"/>
<rect x="113" y="103" width="738" height="721" fill="#ffbfbf"/>
<defs><clipPath id="pk"><rect x="113" y="103" width="738" height="721"/></clipPath><clipPath id="ph"><path d="M310 296 L702 522.5 L498.5 640 L107 413.5 Z"/></clipPath><g id="grid" stroke="#d03848" stroke-width="1" fill="none"><line x1="145.60" y1="104" x2="145.60" y2="824"/>
<line x1="180.97" y1="104" x2="180.97" y2="824"/>
<line x1="216.34" y1="104" x2="216.34" y2="824"/>
<line x1="251.71" y1="104" x2="251.71" y2="824"/>
<line x1="287.08" y1="104" x2="287.08" y2="824"/>
<line x1="322.45" y1="104" x2="322.45" y2="824"/>
<line x1="357.82" y1="104" x2="357.82" y2="824"/>
<line x1="393.19" y1="104" x2="393.19" y2="824"/>
<line x1="428.56" y1="104" x2="428.56" y2="824"/>
<line x1="463.93" y1="104" x2="463.93" y2="824"/>
<line x1="499.30" y1="104" x2="499.30" y2="824"/>
<line x1="534.67" y1="104" x2="534.67" y2="824"/>
<line x1="570.04" y1="104" x2="570.04" y2="824"/>
<line x1="605.41" y1="104" x2="605.41" y2="824"/>
<line x1="640.78" y1="104" x2="640.78" y2="824"/>
<line x1="676.15" y1="104" x2="676.15" y2="824"/>
<line x1="711.52" y1="104" x2="711.52" y2="824"/>
<line x1="746.89" y1="104" x2="746.89" y2="824"/>
<line x1="782.26" y1="104" x2="782.26" y2="824"/>
<line x1="817.63" y1="104" x2="817.63" y2="824"/>
<line x1="113" y1="-304.04" x2="851" y2="122.05"/>
<line x1="113" y1="-263.20" x2="851" y2="162.89"/>
<line x1="113" y1="-222.36" x2="851" y2="203.73"/>
<line x1="113" y1="-181.51" x2="851" y2="244.57"/>
<line x1="113" y1="-140.67" x2="851" y2="285.41"/>
<line x1="113" y1="-99.83" x2="851" y2="326.25"/>
<line x1="113" y1="-58.99" x2="851" y2="367.10"/>
<line x1="113" y1="-18.15" x2="851" y2="407.94"/>
<line x1="113" y1="22.69" x2="851" y2="448.78"/>
<line x1="113" y1="63.54" x2="851" y2="489.62"/>
<line x1="113" y1="104.38" x2="851" y2="530.46"/>
<line x1="113" y1="145.22" x2="851" y2="571.30"/>
<line x1="113" y1="186.06" x2="851" y2="612.15"/>
<line x1="113" y1="226.90" x2="851" y2="652.99"/>
<line x1="113" y1="267.75" x2="851" y2="693.83"/>
<line x1="113" y1="308.59" x2="851" y2="734.67"/>
<line x1="113" y1="349.43" x2="851" y2="775.51"/>
<line x1="113" y1="390.27" x2="851" y2="816.36"/>
<line x1="113" y1="431.11" x2="851" y2="857.20"/>
<line x1="113" y1="471.95" x2="851" y2="898.04"/>
<line x1="113" y1="512.80" x2="851" y2="938.88"/>
<line x1="113" y1="553.64" x2="851" y2="979.72"/>
<line x1="113" y1="594.48" x2="851" y2="1020.56"/>
<line x1="113" y1="635.32" x2="851" y2="1061.41"/>
<line x1="113" y1="676.16" x2="851" y2="1102.25"/>
<line x1="113" y1="717.00" x2="851" y2="1143.09"/>
<line x1="113" y1="757.85" x2="851" y2="1183.93"/>
<line x1="113" y1="798.69" x2="851" y2="1224.77"/>
<line x1="113" y1="142.02" x2="851" y2="-284.06"/>
<line x1="113" y1="182.86" x2="851" y2="-243.22"/>
<line x1="113" y1="223.71" x2="851" y2="-202.38"/>
<line x1="113" y1="264.55" x2="851" y2="-161.54"/>
<line x1="113" y1="305.39" x2="851" y2="-120.70"/>
<line x1="113" y1="346.23" x2="851" y2="-79.85"/>
<line x1="113" y1="387.07" x2="851" y2="-39.01"/>
<line x1="113" y1="427.91" x2="851" y2="1.83"/>
<line x1="113" y1="468.76" x2="851" y2="42.67"/>
<line x1="113" y1="509.60" x2="851" y2="83.51"/>
<line x1="113" y1="550.44" x2="851" y2="124.35"/>
<line x1="113" y1="591.28" x2="851" y2="165.20"/>
<line x1="113" y1="632.12" x2="851" y2="206.04"/>
<line x1="113" y1="672.96" x2="851" y2="246.88"/>
<line x1="113" y1="713.81" x2="851" y2="287.72"/>
<line x1="113" y1="754.65" x2="851" y2="328.56"/>
<line x1="113" y1="795.49" x2="851" y2="369.41"/>
<line x1="113" y1="836.33" x2="851" y2="410.25"/>
<line x1="113" y1="877.17" x2="851" y2="451.09"/>
<line x1="113" y1="918.02" x2="851" y2="491.93"/>
<line x1="113" y1="958.86" x2="851" y2="532.77"/>
<line x1="113" y1="999.70" x2="851" y2="573.61"/>
<line x1="113" y1="1040.54" x2="851" y2="614.46"/>
<line x1="113" y1="1081.38" x2="851" y2="655.30"/>
<line x1="113" y1="1122.22" x2="851" y2="696.14"/>
<line x1="113" y1="1163.07" x2="851" y2="736.98"/>
<line x1="113" y1="1203.91" x2="851" y2="777.82"/>
<line x1="113" y1="1244.75" x2="851" y2="818.66"/></g></defs>
<use href="#grid" clip-path="url(#pk)" stroke-opacity="0.42"/>
<g transform="matrix(0.8653,-0.5009,0.8648,0.5021,107,413.5)">
<rect x="0" y="0" width="234.6" height="452.1" rx="10" fill="#fdfafa"/>
<rect x="11" y="37" width="215" height="364" rx="3" fill="#eee6e6"/>
<rect x="52" y="15.5" width="125" height="3.5" rx="1.7" fill="#e9dfdf"/>
<circle cx="118" cy="427" r="19" fill="#eee6e6"/>
</g>
<g clip-path="url(#ph)"><use href="#grid" style="stroke:#e0506a" stroke-opacity="0.3"/></g>


<!-- transform box -->
<path d="M310 296 L702 522.5 L498.5 640 L107 413.5 Z" fill="none" stroke="#3a3a3a" stroke-width="1"/>
<g fill="#d9cccc" stroke="#2e3532" stroke-width="1.4">
<rect x="306.5" y="292.5" width="7" height="7"/>
<rect x="698.5" y="519" width="7" height="7"/>
<rect x="495" y="636.5" width="7" height="7"/>
<rect x="103.5" y="410" width="7" height="7"/>
<rect x="204.5" y="351.5" width="7" height="7"/>
<rect x="502" y="406" width="7" height="7"/>
<rect x="596.5" y="578" width="7" height="7"/>
<rect x="299.5" y="523" width="7" height="7"/>
</g>
<g stroke="#444" stroke-width="1" fill="none"><circle cx="404.5" cy="469" r="3"/><path d="M404.5 462 V476 M397.5 469 H411.5"/></g>
</svg>
<!-- vertical scrollbar -->
<div class="a" style="left:926px;top:86px;width:17px;height:738px;background:#3a3a3a"></div>
<div class="a" style="left:928px;top:331px;width:13px;height:252px;background:linear-gradient(90deg,#737373,#858585 50%,#777);border-radius:3px"></div>
<svg class="a" style="left:931px;top:92px" width="8" height="4"><path d="M0 4 L4.0 0 L8 4Z" fill="#eee"/></svg>
<svg class="a" style="left:931px;top:815px" width="8" height="4"><path d="M0 0 L4.0 4 L8 0Z" fill="#eee"/></svg>
<div class="a" style="left:943px;top:66px;width:2px;height:779px;background:#2c2c2c"></div>
<!-- STATUS BAR -->
<div class="a" style="left:45px;top:824px;width:898px;height:16px;background:#3c3c3c"></div>
<div class="t" style="left:47px;top:827px;font-size:11px;color:#e4e4e4">36.95%</div>
<div class="a" style="left:93px;top:824px;width:23px;height:16px;background:#484848;border-right:1px solid #2e2e2e"></div>
<svg class="a" style="left:98px;top:826px" width="12" height="12"><circle cx="6" cy="6" r="4.5" fill="#bbb"/><path d="M6 3 V6 H9" stroke="#555" fill="none"/></svg>
<div class="t" style="left:152px;top:827px;font-size:12px;color:#e4e4e4">文档:11.4M/0 字节</div>
<div class="a" style="left:287px;top:824px;width:13px;height:16px;background:#4a4a4a"></div>
<svg class="a" style="left:290px;top:829px" width="7" height="9"><path d="M0 0 L7 4.5 L0 9Z" fill="#eee"/></svg>
<svg class="a" style="left:305px;top:831px" width="4" height="5"><path d="M4 0 L0 2.5 L4 5Z" fill="#ccc"/></svg>
<div class="a" style="left:505px;top:826px;width:222px;height:12px;background:linear-gradient(#8c8c8c,#6f6f6f);border-radius:3px"></div>
<svg class="a" style="left:916px;top:831px" width="4" height="5"><path d="M0 0 L4 2.5 L0 5Z" fill="#ccc"/></svg>
<div class="a" style="left:926px;top:824px;width:17px;height:16px;background:#4a4a4a"></div>
<div class="a" style="left:5px;top:840px;width:1230px;height:2px;background:#2e2e2e"></div>
<!-- RIGHT ICON COLUMN -->
<div class="a" style="left:945px;top:66px;width:290px;height:13px;background:#363636"></div>
<svg class="a" style="left:971px;top:69px" width="10" height="7"><path d="M4 0 L0 3.5 L4 7Z M9 0 L5 3.5 L9 7Z" fill="#ccc"/></svg>
<svg class="a" style="left:1222px;top:69px" width="10" height="7"><path d="M0 0 L4 3.5 L0 7Z M5 0 L9 3.5 L5 7Z" fill="#ccc"/></svg>
<div class="a" style="left:945px;top:79px;width:37px;height:766px;background:#525252"></div>
<div class="a" style="left:945px;top:79px;width:37px;height:68px;background:#535353;border-bottom:1px solid #2e2e2e"></div>
<div class="a" style="left:945px;top:148px;width:37px;height:40px;background:#535353;border-bottom:1px solid #2e2e2e"></div>
<div class="a" style="left:945px;top:189px;width:37px;height:68px;background:#535353;border-bottom:1px solid #2e2e2e"></div>
<div class="a" style="left:954px;top:83px;width:20px;height:2px;background:#3a3a3a"></div>
<div class="a" style="left:954px;top:152px;width:20px;height:2px;background:#3a3a3a"></div>
<div class="a" style="left:954px;top:193px;width:20px;height:2px;background:#3a3a3a"></div>
<svg class="a" style="left:945px;top:79px" width="38" height="180" viewBox="945 79 38 180">
<g fill="#cfcfcf">
<rect x="958" y="93" width="4" height="4" fill="none" stroke="#cfcfcf"/><rect x="958" y="99" width="4" height="4" fill="none" stroke="#cfcfcf"/><rect x="958" y="105" width="4" height="4"/>
<path d="M965 99 Q967 94 970 96 Q973 99 970 106" fill="none" stroke="#cfcfcf" stroke-width="1.4"/><path d="M963 96 l4 -3 v5z"/>
<path d="M958 123 L974 130 L958 137 Z"/>
<circle cx="965" cy="171" r="7"/><rect x="964" y="169" width="2.5" height="6" fill="#535353"/><circle cx="965" cy="166.5" r="1.3" fill="#535353"/>
<text x="957" y="219" font-family="Liberation Sans" font-size="15" fill="#cfcfcf">A</text><rect x="969" y="204" width="1.2" height="15"/>
<path d="M962 234 h9 v13 h-2 v-11 h-1 v11 h-2 v-6 a3.5 3.5 0 0 1 -4 -3.5 a3.5 3.5 0 0 1 0 -3.5z"/>
</g></svg>
<div class="a" style="left:982px;top:79px;width:4px;height:766px;background:#2e2e2e"></div>
<!-- PROPERTIES PANEL -->
<div class="a" style="left:986px;top:79px;width:249px;height:17px;background:#3c3c3c"></div>
<div class="a" style="left:986px;top:79px;width:36px;height:17px;background:#535353"></div>
<div class="t" style="left:993px;top:82px;color:#e8e8e8">属性</div>
<svg class="a" style="left:1215px;top:83px" width="16" height="10"><path d="M0 3 L4 3 L2 6Z" fill="#ccc"/><path d="M5 1.5 H15 M5 4.5 H15 M5 7.5 H15" stroke="#ccc"/></svg>
<div class="a" style="left:986px;top:96px;width:249px;height:34px;background:#535353"></div>
<div class="t" style="left:994px;top:107px;color:#c6c6c6">无属性</div>
<div class="a" style="left:986px;top:129px;width:249px;height:1px;background:#383838"></div>
<div class="a" style="left:986px;top:130px;width:234px;height:293px;background:#535353;border-top:1px solid #5d5d5d"></div>
<div class="a" style="left:1220px;top:130px;width:15px;height:293px;background:#3f3f3f;border-left:1px solid #4a4a4a"></div>
<div class="a" style="left:986px;top:422px;width:249px;height:1px;background:#3e3e3e"></div>
<div class="a" style="left:986px;top:423px;width:249px;height:18px;background:#535353"></div>
<svg class="a" style="left:1192px;top:425px" width="14" height="14"><rect x="1" y="2" width="12" height="2" fill="#777"/><rect x="5" y="0" width="4" height="2" fill="#777"/><path d="M3 5 h8 l-1 8 h-6z" fill="#777"/><path d="M5 6 v6 M7 6 v6 M9 6 v6" stroke="#535353"/></svg>
<svg class="a" style="left:1223px;top:430px" width="10" height="10"><path d="M9 1 L1 9 M9 4 L4 9 M9 7 L7 9" stroke="#777"/></svg>
<div class="a" style="left:986px;top:441px;width:249px;height:3px;background:#2c2c2c"></div>
<!-- LAYERS PANEL -->
<div class="a" style="left:986px;top:444px;width:249px;height:17px;background:#3c3c3c"></div>
<div class="a" style="left:986px;top:444px;width:36px;height:17px;background:#535353"></div>
<div class="a" style="left:1022px;top:444px;width:36px;height:17px;background:#444;border-right:1px solid #333"></div>
<div class="a" style="left:1058px;top:444px;width:38px;height:17px;background:#444;border-right:1px solid #333"></div>
<div class="t" style="left:993px;top:447px;color:#e8e8e8">图层</div>
<div class="t" style="left:1030px;top:447px;color:#c8c8c8">通道</div>
<div class="t" style="left:1067px;top:447px;color:#c8c8c8">路径</div>
<svg class="a" style="left:1215px;top:448px" width="16" height="10"><path d="M0 3 L4 3 L2 6Z" fill="#ccc"/><path d="M5 1.5 H15 M5 4.5 H15 M5 7.5 H15" stroke="#ccc"/></svg>
<div class="a" style="left:986px;top:461px;width:249px;height:385px;background:#535353"></div>
<!-- filter row -->
<div class="a" style="left:991px;top:466px;width:68px;height:18px;background:#5a5a5a;border:1px solid #464646;border-radius:3px"></div>
<div class="t" style="left:996px;top:469px;color:#9a9a9a">⌕ 类型</div>
<svg class="a" style="left:1050px;top:470px" width="6" height="11"><path d="M0 4 L3 0 L6 4Z M0 7 L3 11 L6 7Z" fill="#999"/></svg>
<svg class="a" style="left:1078px;top:466px" width="150" height="20" viewBox="1078 466 150 20">
<g fill="#777" stroke="#777">
<rect x="1081.5" y="469.5" width="13" height="11" fill="none"/><path d="M1083 479 L1087 474 L1090 477 L1091.5 475.5 L1093 479Z" stroke="none"/><circle cx="1090.5" cy="472.5" r="1" stroke="none"/>
<circle cx="1111" cy="475" r="6" stroke="none"/><path d="M1107 479 L1115 471 A6 6 0 0 1 1107 479Z" fill="#999" stroke="none"/>
<text x="1129" y="482" font-family="Liberation Serif" font-size="16" stroke="none">T</text>
<rect x="1156.5" y="470.5" width="8" height="9" fill="none"/><rect x="1154.5" y="468.5" width="3" height="3" fill="#535353"/><rect x="1163.5" y="468.5" width="3" height="3" fill="#535353"/><rect x="1154.5" y="478.5" width="3" height="3" fill="#535353"/><rect x="1163.5" y="478.5" width="3" height="3" fill="#535353"/>
<path d="M1180.5 469.5 h4 l3 3 v8 h-7z" fill="none"/><rect x="1176" y="475" width="6" height="6" stroke="none"/>
<rect x="1213" y="467" width="7" height="16" stroke="none" fill="#404040"/><rect x="1213" y="467" width="7" height="8" stroke="none" fill="#6a6a6a"/>
</g></svg>
<div class="a" style="left:986px;top:488px;width:249px;height:1px;background:#434343"></div>
<!-- blend row -->
<div class="a" style="left:990px;top:493px;width:109px;height:19px;background:linear-gradient(#676767,#5a5a5a);border:1px solid #3e3e3e;border-radius:3px"></div>
<div class="t" style="left:997px;top:497px;color:#e8e8e8">穿透</div>
<svg class="a" style="left:1089px;top:498px" width="6" height="11"><path d="M0 4 L3 0 L6 4Z M0 7 L3 11 L6 7Z" fill="#ddd"/></svg>
<div class="t" style="left:1107px;top:497px;color:#e8e8e8">不透明度:</div>
<div class="a" style="left:1165px;top:493px;width:55px;height:19px;background:#383838;border:1px solid #333"></div>
<div class="a" style="left:1200px;top:494px;width:19px;height:17px;background:linear-gradient(#6a6a6a,#5c5c5c)"></div>
<div class="t" style="left:1168px;top:498px;color:#e8e8e8;font-size:11px">100%</div>
<svg class="a" style="left:1207px;top:502px" width="6" height="3.5"><path d="M0 0 L3.0 3.5 L6 0Z" fill="#ddd"/></svg>
<div class="a" style="left:986px;top:517px;width:249px;height:1px;background:#434343"></div>
<!-- lock row -->
<div class="t" style="left:991px;top:524px;color:#a8a8a8">锁定:</div>
<svg class="a" style="left:1028px;top:522px" width="80" height="18" viewBox="1028 522 80 18">
<g fill="#808080">
<rect x="1030" y="526" width="10" height="10"/><rect x="1030" y="526" width="5" height="5" fill="#5e5e5e"/><rect x="1035" y="531" width="5" height="5" fill="#5e5e5e"/>
<path d="M1050 536 Q1051 531 1055 532 L1064 524 L1065 525 L1057 534 Q1056 537 1050 536Z"/>
<path d="M1079 524 V538 M1072 531 H1086" stroke="#808080" stroke-width="1.2"/><path d="M1079 523 l-2 2 h4z M1079 539 l-2 -2 h4z M1071 531 l2 -2 v4z M1087 531 l-2 -2 v4z"/>
<rect x="1096" y="530" width="10" height="7"/><path d="M1098 530 v-2 a3 3 0 0 1 6 0 v2" fill="none" stroke="#808080" stroke-width="1.4"/>
</g></svg>
<div class="t" style="left:1131px;top:524px;color:#e8e8e8">填充:</div>
<div class="a" style="left:1165px;top:521px;width:55px;height:19px;background:#383838;border:1px solid #333"></div>
<div class="a" style="left:1200px;top:522px;width:19px;height:17px;background:linear-gradient(#6a6a6a,#5c5c5c)"></div>
<div class="t" style="left:1168px;top:525px;color:#e8e8e8;font-size:11px">100%</div>
<svg class="a" style="left:1207px;top:530px" width="6" height="3.5"><path d="M0 0 L3.0 3.5 L6 0Z" fill="#ddd"/></svg>
<div class="a" style="left:986px;top:545px;width:234px;height:1px;background:#3a3a3a"></div>
<!-- LAYER ROWS -->
<svg width="0" height="0" style="position:absolute"><defs>
<symbol id="eye" viewBox="0 0 16 10"><path d="M1 5 Q8 -1 15 5 Q8 11 1 5Z" fill="#a0a0a0"/><circle cx="8" cy="5" r="2.7" fill="#333"/><circle cx="7.2" cy="4.2" r="0.8" fill="#bbb"/></symbol>
<symbol id="thumb" viewBox="0 0 32 22"><path d="M0.5 0.5 H30.5 V9.5 H17.5 V20.5 H0.5 Z" fill="#f2eeee" stroke="#111"/><path d="M1 1 h4 v4 h-4z M9 1 h4 v4 h-4z M17 1 h4 v4 h-4z M25 1 h4 v4 h-4z M5 5 h4 v4 h-4z M13 5 h4 v4 h-4z M21 5 h4 v4 h-4z M29 5 h1.5 v4 h-1.5z M1 9 h4 v4 h-4z M9 9 h4 v4 h-4z M5 13 h4 v4 h-4z M13 13 h4 v4 h-4z M1 17 h4 v3.5 h-4z M9 17 h4 v3.5 h-4z" fill="#d6d6d6"/><rect x="20.5" y="12.5" width="9" height="8" fill="none" stroke="#aaa" stroke-width="1"/><g fill="#535353" stroke="#aaa" stroke-width="0.8"><rect x="19" y="11" width="3" height="3"/><rect x="28" y="11" width="3" height="3"/><rect x="19" y="19" width="3" height="3"/><rect x="28" y="19" width="3" height="3"/></g></symbol>
</defs></svg>
<div class="a" style="left:986px;top:546px;width:234px;height:275px;overflow:hidden">
<div class="a" style="left:0;top:0px;width:234px;height:26px;border-bottom:1px solid #3a3a3a"></div>
<div class="a" style="left:29px;top:0px;width:1px;height:25px;background:#444"></div>
<svg class="a" style="left:7px;top:3px" width="16" height="10"><use href="#eye"/></svg>
<svg class="a" style="left:50px;top:0px" width="32" height="22"><use href="#thumb"/></svg>
<div class="t" style="left:91px;top:4px;color:#ececec">形状 1</div>
<div class="a" style="left:0;top:25px;width:234px;height:25px;background:#535353;border-bottom:1px solid #3a3a3a"></div>
<div class="a" style="left:30px;top:25px;width:204px;height:24px;background:#5b6577"></div>
<div class="a" style="left:29px;top:25px;width:1px;height:24px;background:#444"></div>
<svg class="a" style="left:7px;top:31px" width="16" height="10"><use href="#eye"/></svg>
<svg class="a" style="left:35px;top:33px" width="9" height="7"><path d="M0 0 H9 L4.5 6Z" fill="#e6e6e6"/></svg>
<svg class="a" style="left:47px;top:30px" width="16" height="12"><path d="M0.5 1.5 h6 l1.5 2 h7.5 v8 h-15z" fill="#b8b8b8"/><rect x="0.5" y="5" width="15" height="6.5" fill="#cfcfcf"/></svg>
<div class="t" style="left:74px;top:32px;color:#ececec">手机</div>
<div class="a" style="left:0;top:49px;width:234px;height:39px;border-bottom:1px solid #3a3a3a"></div>
<div class="a" style="left:29px;top:49px;width:1px;height:38px;background:#444"></div>
<svg class="a" style="left:7px;top:62px" width="16" height="10"><use href="#eye"/></svg>
<svg class="a" style="left:50px;top:57px" width="32" height="22"><use href="#thumb"/></svg>
<div class="t" style="left:91px;top:63px;color:#ececec">圆角矩形 2</div>
<div class="a" style="left:0;top:87px;width:234px;height:40px;border-bottom:1px solid #3a3a3a"></div>
<div class="a" style="left:29px;top:87px;width:1px;height:39px;background:#444"></div>
<svg class="a" style="left:7px;top:101px" width="16" height="10"><use href="#eye"/></svg>
<svg class="a" style="left:50px;top:96px" width="32" height="22"><use href="#thumb"/></svg>
<div class="t" style="left:91px;top:102px;color:#ececec">椭圆 2</div>
<div class="a" style="left:0;top:126px;width:234px;height:40px;border-bottom:1px solid #3a3a3a"></div>
<div class="a" style="left:29px;top:126px;width:1px;height:39px;background:#444"></div>
<svg class="a" style="left:7px;top:140px" width="16" height="10"><use href="#eye"/></svg>
<svg class="a" style="left:50px;top:135px" width="32" height="22"><use href="#thumb"/></svg>
<div class="t" style="left:91px;top:141px;color:#ececec">椭圆 1</div>
<div class="a" style="left:0;top:165px;width:234px;height:40px;border-bottom:1px solid #3a3a3a"></div>
<div class="a" style="left:29px;top:165px;width:1px;height:39px;background:#444"></div>
<svg class="a" style="left:7px;top:179px" width="16" height="10"><use href="#eye"/></svg>
<svg class="a" style="left:50px;top:174px" width="32" height="22"><use href="#thumb"/></svg>
<div class="t" style="left:91px;top:180px;color:#ececec">矩形 1</div>
<div class="a" style="left:0;top:204px;width:234px;height:40px;border-bottom:1px solid #3a3a3a"></div>
<div class="a" style="left:29px;top:204px;width:1px;height:39px;background:#444"></div>
<svg class="a" style="left:7px;top:218px" width="16" height="10"><use href="#eye"/></svg>
<svg class="a" style="left:50px;top:213px" width="32" height="22"><use href="#thumb"/></svg>
<div class="t" style="left:91px;top:219px;color:#ececec">圆角矩形 1</div>
<div class="a" style="left:0;top:243px;width:234px;height:33px;border-bottom:1px solid #3a3a3a"></div>
<div class="a" style="left:29px;top:243px;width:1px;height:32px;background:#444"></div>
<svg class="a" style="left:7px;top:257px" width="16" height="10"><use href="#eye"/></svg>
<div class="a" style="left:33px;top:246px;width:32px;height:29px;background:#ffbfbf;border:1px solid #111"></div>
<div class="t" style="left:75px;top:257px;color:#ececec">背景</div>
</div>
<div class="a" style="left:1220px;top:546px;width:15px;height:275px;background:#3c3c3c"></div>
<div class="a" style="left:1223px;top:629px;width:10px;height:147px;background:linear-gradient(90deg,#7a7a7a,#8a8a8a);border-radius:3px"></div>
<svg class="a" style="left:1225px;top:553px" width="6" height="4"><path d="M0 4 L3.0 0 L6 4Z" fill="#eee"/></svg>
<svg class="a" style="left:1225px;top:811px" width="6" height="4"><path d="M0 0 L3.0 4 L6 0Z" fill="#eee"/></svg>
<div class="a" style="left:986px;top:821px;width:249px;height:1px;background:#3a3a3a"></div>
<svg class="a" style="left:1028px;top:824px" width="180" height="14" viewBox="1028 824 180 14">
<g fill="#7a7a7a" stroke="#7a7a7a">
<rect x="1033.5" y="828" width="7" height="5" rx="2.5" fill="none" stroke-width="1.4"/><rect x="1038.5" y="828" width="7" height="5" rx="2.5" fill="none" stroke-width="1.4"/>
<text x="1060" y="836" font-family="Liberation Serif" font-style="italic" font-size="12" stroke="none">fx</text>
<rect x="1087" y="826" width="13" height="10" stroke="none"/><circle cx="1093.5" cy="831" r="2.8" fill="#535353" stroke="none"/>
<circle cx="1120" cy="831" r="5.5" stroke="none"/><path d="M1117 834 L1123 828" stroke="#535353" stroke-width="1.3"/>
<path d="M1141 826 h5 l1 1.5 h6 v8.5 h-12z" stroke="none"/>
<rect x="1169" y="826" width="11" height="10" stroke="none"/><rect x="1169" y="831" width="5" height="5" fill="#535353" stroke="none"/>
<rect x="1194" y="826.5" width="12" height="1.5" stroke="none"/><rect x="1198" y="825" width="4" height="1.5" stroke="none"/><path d="M1195.5 829 h9 l-0.8 8 h-7.4z" stroke="none"/>
</g></svg>
</body></html>
